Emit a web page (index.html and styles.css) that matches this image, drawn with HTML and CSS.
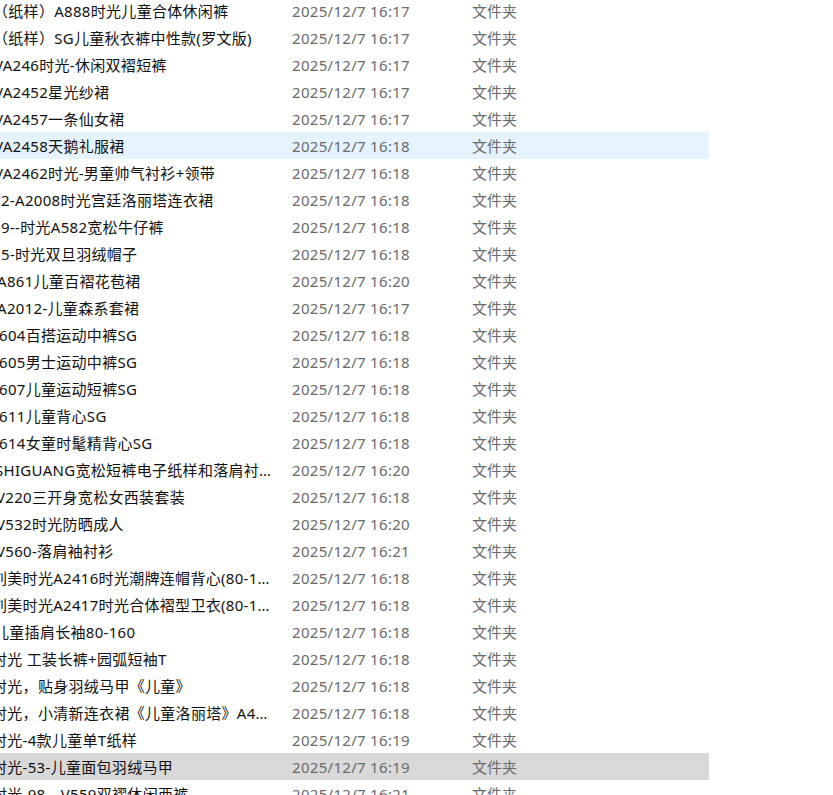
FILE: index.html
```html
<!DOCTYPE html>
<html lang="zh-CN">
<head>
<meta charset="utf-8">
<title>文件列表</title>
<link rel="stylesheet" href="styles.css">
</head>
<body>
<div class="view">
  <div class="list">
    <div class="row"><div class="name"><span class="cut-paren">（</span>纸样）A888时光儿童合体休闲裤</div><div class="date">2025/12/7 16:17</div><div class="type">文件夹</div></div>
    <div class="row"><div class="name"><span class="cut-paren">（</span>纸样）SG儿童秋衣裤中性款(罗文版)</div><div class="date">2025/12/7 16:17</div><div class="type">文件夹</div></div>
    <div class="row"><div class="name"><span class="cut-v">V</span>A246时光-休闲双褶短裤</div><div class="date">2025/12/7 16:17</div><div class="type">文件夹</div></div>
    <div class="row"><div class="name"><span class="cut-v">V</span>A2452星光纱裙</div><div class="date">2025/12/7 16:17</div><div class="type">文件夹</div></div>
    <div class="row"><div class="name"><span class="cut-v">V</span>A2457一条仙女裙</div><div class="date">2025/12/7 16:17</div><div class="type">文件夹</div></div>
    <div class="row hover"><div class="name"><span class="cut-v">V</span>A2458天鹅礼服裙</div><div class="date">2025/12/7 16:18</div><div class="type">文件夹</div></div>
    <div class="row"><div class="name"><span class="cut-v">V</span>A2462时光-男童帅气衬衫+领带</div><div class="date">2025/12/7 16:18</div><div class="type">文件夹</div></div>
    <div class="row"><div class="name"><span class="lead">2</span>-A2008时光宫廷洛丽塔连衣裙</div><div class="date">2025/12/7 16:18</div><div class="type">文件夹</div></div>
    <div class="row"><div class="name"><span class="lead">9</span>--时光A582宽松牛仔裤</div><div class="date">2025/12/7 16:18</div><div class="type">文件夹</div></div>
    <div class="row"><div class="name"><span class="lead">5</span>-时光双旦羽绒帽子</div><div class="date">2025/12/7 16:18</div><div class="type">文件夹</div></div>
    <div class="row"><div class="name"><span class="cut-a">A</span>861儿童百褶花苞裙</div><div class="date">2025/12/7 16:20</div><div class="type">文件夹</div></div>
    <div class="row"><div class="name"><span class="cut-a">A</span>2012-儿童森系套裙</div><div class="date">2025/12/7 16:17</div><div class="type">文件夹</div></div>
    <div class="row"><div class="name"><span class="cut-six">6</span>04百搭运动中裤SG</div><div class="date">2025/12/7 16:18</div><div class="type">文件夹</div></div>
    <div class="row"><div class="name"><span class="cut-six">6</span>05男士运动中裤SG</div><div class="date">2025/12/7 16:18</div><div class="type">文件夹</div></div>
    <div class="row"><div class="name"><span class="cut-six">6</span>07儿童运动短裤SG</div><div class="date">2025/12/7 16:18</div><div class="type">文件夹</div></div>
    <div class="row"><div class="name"><span class="cut-six">6</span>11儿童背心SG</div><div class="date">2025/12/7 16:18</div><div class="type">文件夹</div></div>
    <div class="row"><div class="name"><span class="cut-six">6</span>14女童时髦精背心SG</div><div class="date">2025/12/7 16:18</div><div class="type">文件夹</div></div>
    <div class="row"><div class="name"><span class="cut-s">S</span>HIGUANG宽松短裤电子纸样和落肩衬衫套装</div><div class="date">2025/12/7 16:20</div><div class="type">文件夹</div></div>
    <div class="row"><div class="name"><span class="cut-v2">V</span>220三开身宽松女西装套装</div><div class="date">2025/12/7 16:18</div><div class="type">文件夹</div></div>
    <div class="row"><div class="name"><span class="cut-v2">V</span>532时光防晒成人</div><div class="date">2025/12/7 16:20</div><div class="type">文件夹</div></div>
    <div class="row"><div class="name"><span class="cut-v2">V</span>560-落肩袖衬衫</div><div class="date">2025/12/7 16:21</div><div class="type">文件夹</div></div>
    <div class="row"><div class="name"><span class="cut-cjk">刘</span>美时光A2416时光潮牌连帽背心(80-160)</div><div class="date">2025/12/7 16:18</div><div class="type">文件夹</div></div>
    <div class="row"><div class="name"><span class="cut-cjk">刘</span>美时光A2417时光合体褶型卫衣(80-160)</div><div class="date">2025/12/7 16:18</div><div class="type">文件夹</div></div>
    <div class="row"><div class="name"><span class="cut-er">儿</span>童插肩长袖80-160</div><div class="date">2025/12/7 16:18</div><div class="type">文件夹</div></div>
    <div class="row"><div class="name"><span class="cut-cjk">时</span>光 工装长裤+园弧短袖T</div><div class="date">2025/12/7 16:18</div><div class="type">文件夹</div></div>
    <div class="row"><div class="name"><span class="cut-cjk">时</span>光，贴身羽绒马甲《儿童》</div><div class="date">2025/12/7 16:18</div><div class="type">文件夹</div></div>
    <div class="row"><div class="name"><span class="cut-cjk">时</span>光，小清新连衣裙《儿童洛丽塔》A4 打印</div><div class="date">2025/12/7 16:18</div><div class="type">文件夹</div></div>
    <div class="row"><div class="name"><span class="cut-cjk">时</span>光-4款儿童单T纸样</div><div class="date">2025/12/7 16:19</div><div class="type">文件夹</div></div>
    <div class="row selected"><div class="name"><span class="cut-cjk">时</span>光-53-儿童面包羽绒马甲</div><div class="date">2025/12/7 16:19</div><div class="type">文件夹</div></div>
    <div class="row"><div class="name"><span class="cut-cjk">时</span>光-98、V559双褶休闲西裤</div><div class="date">2025/12/7 16:21</div><div class="type">文件夹</div></div>
  </div>
</div>
</body>
</html>
```

FILE: styles.css
```css
html, body {
  margin: 0;
  padding: 0;
  background: #ffffff;
}

.view {
  width: 833px;
  height: 795px;
  overflow: hidden;
  font-family: "Noto Sans", "Noto Sans CJK SC", sans-serif;
  font-size: 15px;
}

.list {
  margin-top: -3px;
  width: 709px;
}

.row {
  display: grid;
  grid-template-columns: 285px 180px 1fr;
  height: 27px;
  align-items: start;
  white-space: nowrap;
}

.row.hover {
  background: #e5f3ff;
}

.row.selected {
  background: #d9d9d9;
}

.name,
.date,
.type {
  padding-top: 2px;
  line-height: 25px;
  letter-spacing: 0.3px;
}

.name {
  width: 271px;
  overflow: hidden;
  text-overflow: ellipsis;
  color: #111111;
}

.date,
.type {
  padding-left: 7px;
  color: #6a6a6a;
}

.type {
  letter-spacing: 0;
}

.lead {
  margin-left: 1px;
}

.cut-paren {
  margin-left: -7px;
}

.cut-v {
  margin-left: -6px;
}

.cut-v2 {
  margin-left: -4px;
}

.cut-a {
  margin-left: -3px;
}

.cut-six {
  margin-left: -1px;
}

.cut-s {
  margin-left: -5px;
}

.cut-cjk {
  margin-left: -8px;
}

.cut-er {
  margin-left: -6px;
}
```
